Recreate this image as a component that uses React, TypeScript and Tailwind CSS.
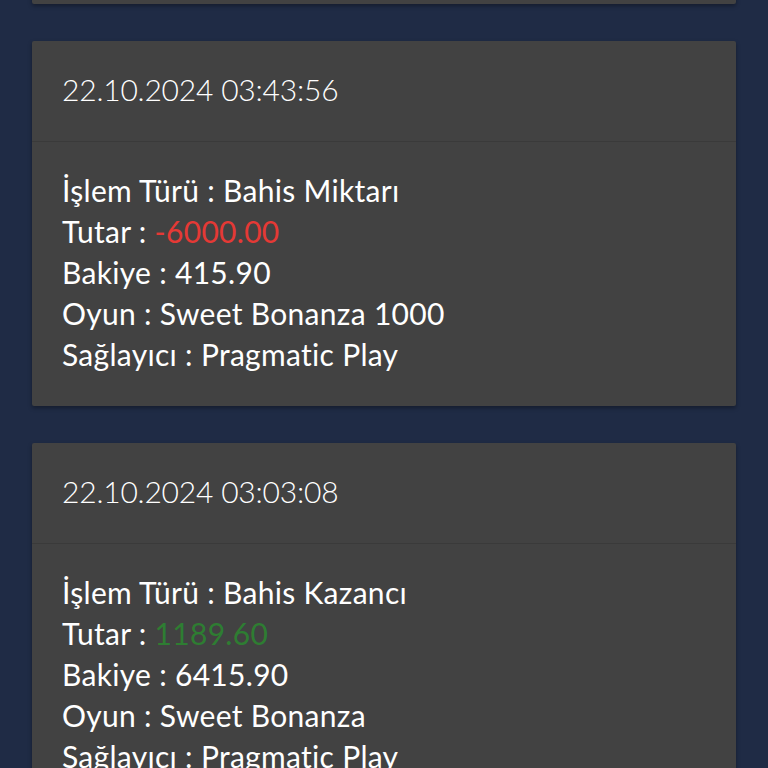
import React from 'react';

type Tx = {
    date: string;
    type: string;
    amount: string;
    positive: boolean;
    balance: string;
    game: string;
    provider: string;
};

const transactions: Tx[] = [
    {
        date: '22.10.2024 03:44:30',
        type: 'Bahis Kazancı',
        amount: '0.00',
        positive: true,
        balance: '415.90',
        game: 'Sweet Bonanza 1000',
        provider: 'Pragmatic Play',
    },
    {
        date: '22.10.2024 03:43:56',
        type: 'Bahis Miktarı',
        amount: '-6000.00',
        positive: false,
        balance: '415.90',
        game: 'Sweet Bonanza 1000',
        provider: 'Pragmatic Play',
    },
    {
        date: '22.10.2024 03:03:08',
        type: 'Bahis Kazancı',
        amount: '1189.60',
        positive: true,
        balance: '6415.90',
        game: 'Sweet Bonanza',
        provider: 'Pragmatic Play',
    },
];

const TxCard: React.FC<{ tx: Tx }> = ({ tx }) => (
    <div className="bg-[#424242] rounded-[2px] shadow-[0_2px_4px_rgba(0,0,0,0.35)]">
        {/* Date header */}
        <div className="h-[101px] flex items-center px-[30px] pb-[4px] border-b border-[#3a3a3a]">
            <span className="text-[30px] font-light tracking-[-0.2px] text-white">{tx.date}</span>
        </div>
        {/* Details */}
        <div className="px-[30px] pt-[28px] pb-[31px] text-[30px] tracking-[0.3px] leading-[41px] text-white">
            <div>İşlem Türü : {tx.type}</div>
            <div>
                Tutar : <span className={tx.positive ? 'text-[#2e7d32]' : 'text-[#e53935]'}>{tx.amount}</span>
            </div>
            <div>Bakiye : {tx.balance}</div>
            <div>Oyun : {tx.game}</div>
            <div>Sağlayıcı : {tx.provider}</div>
        </div>
    </div>
);

export default function App() {
    return (
        <div
            className="h-[768px] overflow-hidden bg-[#1f2b45]"
            style={{ fontFamily: 'Lato, "Noto Sans", sans-serif' }}
        >
            <div className="mt-[-361px] px-[32px] flex flex-col gap-[37px]">
                {transactions.map((tx) => (
                    <TxCard key={tx.date} tx={tx} />
                ))}
            </div>
        </div>
    );
}
